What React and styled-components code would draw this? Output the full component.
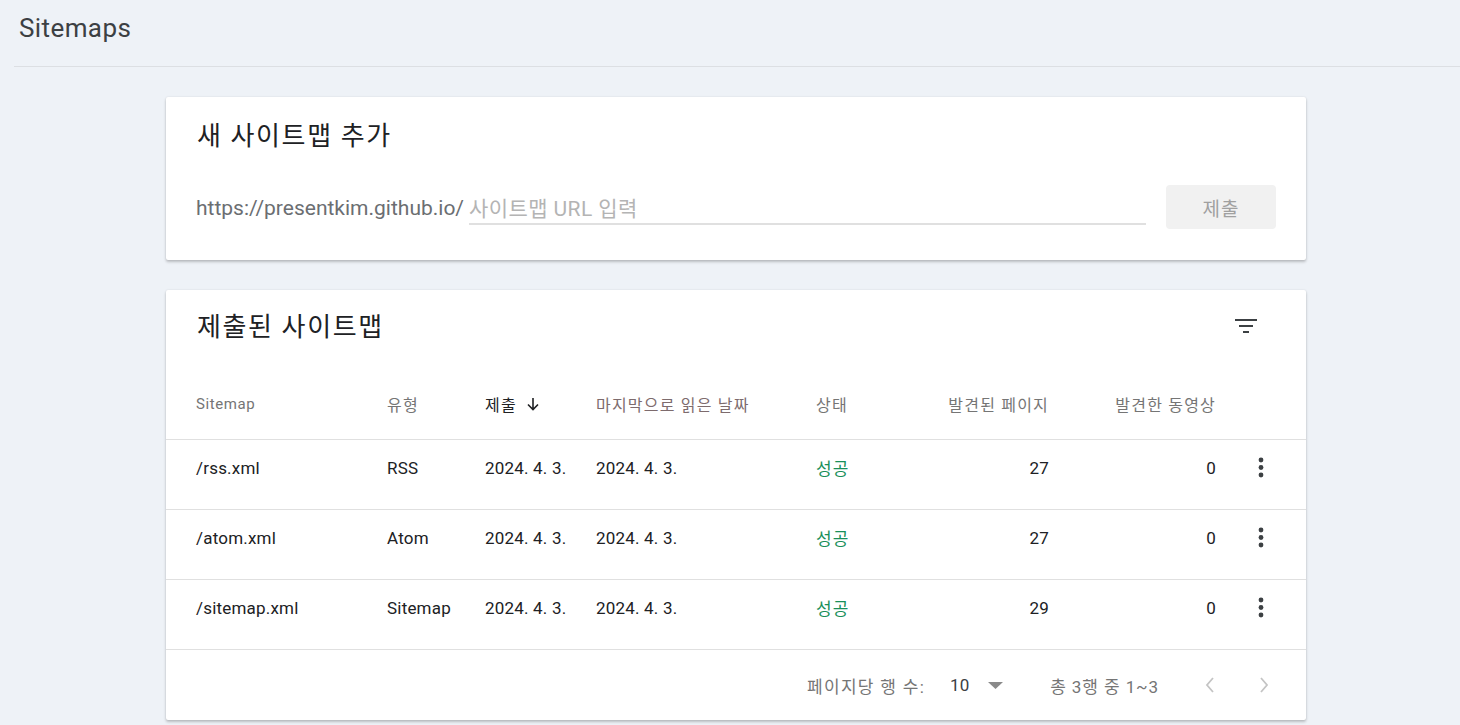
import React from "react";
import styled, { createGlobalStyle } from "styled-components";

const Global = createGlobalStyle`
  html, body { margin: 0; padding: 0; background: #eef2f7; }
  body { font-family: Roboto, "Noto Sans CJK KR", sans-serif; color: #202124; }
  * { box-sizing: border-box; }
`;

const Page = styled.div`
  width: 1460px;
  height: 725px;
  overflow: hidden;
  background: #eef2f7;
`;

const TopBar = styled.header`
  margin-left: 14px;
  height: 67px;
  border-bottom: 1px solid #dcdfe3;
  display: flex;
  align-items: center;
  padding: 0 5px 10px;
`;

const PageTitle = styled.h1`
  margin: 0;
  font-size: 26px;
  font-weight: 400;
  color: #3c4043;
  letter-spacing: 0.4px;
`;

const Content = styled.main`
  width: 1140px;
  margin: 30px 0 0 166px;
  display: flex;
  flex-direction: column;
  gap: 30px;
`;

const Card = styled.section`
  background: #fff;
  border-radius: 2px;
  box-shadow: 0 2px 3px rgba(0, 0, 0, 0.22), 0 0 2px rgba(0, 0, 0, 0.1);
`;

const CardTitle = styled.h2`
  margin: 0;
  font-size: 26px;
  line-height: 32px;
  font-weight: 400;
  color: #202124;
  letter-spacing: 1.6px;
`;

const AddBody = styled.div`
  padding: 23px 30px 31px 31px;
`;

const UrlRow = styled.div`
  display: flex;
  align-items: center;
  margin-top: 33px;
  height: 44px;
`;

const Prefix = styled.span`
  font-size: 21px;
  color: #6b6e72;
  margin-left: -1px;
  padding-top: 2px;
  white-space: nowrap;
`;

const UrlInput = styled.input`
  flex: 1;
  margin-left: 5px;
  height: 30px;
  margin-top: 6px;
  border: none;
  border-bottom: 2px solid #e0e0e0;
  outline: none;
  font-family: Roboto, "Noto Sans CJK KR", sans-serif;
  font-size: 21px;
  color: #202124;
  padding: 0 0 1px 0;
  background: transparent;
  &::placeholder { color: #b4b4b4; letter-spacing: 0.4px; }
`;

const SubmitButton = styled.button`
  margin-left: 20px;
  width: 110px;
  height: 44px;
  border: none;
  border-radius: 4px;
  background: #f1f1f1;
  color: #a0a0a0;
  font-family: Roboto, "Noto Sans CJK KR", sans-serif;
  font-size: 19px;
  letter-spacing: 1px;
`;

const ListHead = styled.div`
  height: 80px;
  padding: 21px 45px 0 31px;
  display: flex;
  justify-content: space-between;
  align-items: flex-start;
`;

const IconButton = styled.button`
  border: none;
  background: none;
  padding: 0;
  display: flex;
  align-items: center;
  justify-content: center;
  width: ${(p) => p.$size || 30}px;
  height: ${(p) => p.$size || 30}px;
`;

const cols = "191px 98px 111px 220px 100px 133px 167px 90px";

const Row = styled.div`
  display: grid;
  grid-template-columns: ${cols};
  padding-left: 30px;
  height: 70px;
  align-items: center;
  border-bottom: 1px solid #e0e0e0;
`;

const HeadCell = styled.div`
  font-size: ${(p) => (p.$latin ? "15px" : "16px")};
  letter-spacing: ${(p) => (p.$latin ? "0.6px" : "1.2px")};
  color: ${(p) => (p.$active ? "#202124" : p.$tint ? "#7d6b6d" : "#757575")};
  text-align: ${(p) => (p.$right ? "right" : "left")};
  display: flex;
  align-items: center;
  justify-content: ${(p) => (p.$right ? "flex-end" : "flex-start")};
  gap: 9px;
  padding-bottom: 1px;
`;

const Cell = styled.div`
  font-size: 17px;
  color: ${(p) => (p.$ok ? "#1a8f5a" : "#202124")};
  text-align: ${(p) => (p.$right ? "right" : "left")};
  display: flex;
  justify-content: ${(p) => (p.$right ? "flex-end" : p.$center ? "center" : "flex-start")};
  letter-spacing: ${(p) => (p.$ok ? "1.2px" : "0.2px")};
  padding-bottom: 14px;
`;

const Footer = styled.div`
  height: 70px;
  display: flex;
  align-items: center;
  padding-left: 641px;
  font-size: 17px;
  color: #757575;
`;

const FooterLabel = styled.span`
  letter-spacing: 1.3px;
`;

const PerPage = styled.div`
  display: flex;
  align-items: center;
  margin-left: 25px;
  color: #3c4043;
  gap: 19px;
`;

const Range = styled.span`
  margin-left: 47px;
  letter-spacing: 0.9px;
`;

const Pager = styled.div`
  display: flex;
  align-items: center;
  gap: 24px;
  margin-left: 36px;
`;

const FilterIcon = () => (
  <svg width="24" height="16" viewBox="0 0 24 16">
    <rect x="1" y="1" width="22" height="2" fill="#3c4043" />
    <rect x="5" y="7" width="14" height="2" fill="#3c4043" />
    <rect x="9" y="13" width="6" height="2" fill="#3c4043" />
  </svg>
);

const MoreIcon = () => (
  <svg width="6" height="22" viewBox="0 0 6 22">
    <circle cx="3" cy="3" r="2.4" fill="#3c4043" />
    <circle cx="3" cy="10.5" r="2.4" fill="#3c4043" />
    <circle cx="3" cy="18" r="2.4" fill="#3c4043" />
  </svg>
);

const ArrowDown = () => (
  <svg width="14" height="14" viewBox="0 0 14 14">
    <path d="M7 1v11M2 7.5l5 5 5-5" stroke="#202124" strokeWidth="1.6" fill="none" />
  </svg>
);

const Caret = () => (
  <svg width="15" height="7" viewBox="0 0 15 7">
    <path d="M0 0h15L7.5 7z" fill="#8a8a8a" />
  </svg>
);

const Chevron = ({ dir }) => (
  <svg width="10" height="16" viewBox="0 0 10 16">
    <path
      d={dir === "left" ? "M8 1L2 8l6 7" : "M2 1l6 7-6 7"}
      stroke="#c4c4c4"
      strokeWidth="1.8"
      fill="none"
    />
  </svg>
);

const rows = [
  { path: "/rss.xml", type: "RSS", pages: 27 },
  { path: "/atom.xml", type: "Atom", pages: 27 },
  { path: "/sitemap.xml", type: "Sitemap", pages: 29 },
];

export default function App() {
  return (
    <Page>
      <Global />
      <TopBar>
        <PageTitle>Sitemaps</PageTitle>
      </TopBar>
      <Content>
        <Card>
          <AddBody>
            <CardTitle>새 사이트맵 추가</CardTitle>
            <UrlRow>
              <Prefix>https://presentkim.github.io/</Prefix>
              <UrlInput placeholder="사이트맵 URL 입력" />
              <SubmitButton>제출</SubmitButton>
            </UrlRow>
          </AddBody>
        </Card>
        <Card>
          <ListHead>
            <CardTitle>제출된 사이트맵</CardTitle>
            <IconButton $size={30}>
              <FilterIcon />
            </IconButton>
          </ListHead>
          <Row>
            <HeadCell $latin>Sitemap</HeadCell>
            <HeadCell>유형</HeadCell>
            <HeadCell $active>
              제출 <ArrowDown />
            </HeadCell>
            <HeadCell $tint>마지막으로 읽은 날짜</HeadCell>
            <HeadCell>상태</HeadCell>
            <HeadCell $right>발견된 페이지</HeadCell>
            <HeadCell $right>발견한 동영상</HeadCell>
            <HeadCell />
          </Row>
          {rows.map((r) => (
            <Row key={r.path}>
              <Cell>{r.path}</Cell>
              <Cell>{r.type}</Cell>
              <Cell>2024. 4. 3.</Cell>
              <Cell>2024. 4. 3.</Cell>
              <Cell $ok>성공</Cell>
              <Cell $right>{r.pages}</Cell>
              <Cell $right>0</Cell>
              <Cell $center>
                <IconButton $size={30}>
                  <MoreIcon />
                </IconButton>
              </Cell>
            </Row>
          ))}
          <Footer>
            <FooterLabel>페이지당 행 수:</FooterLabel>
            <PerPage>
              <span>10</span>
              <Caret />
            </PerPage>
            <Range>총 3행 중 1~3</Range>
            <Pager>
              <IconButton $size={30}>
                <Chevron dir="left" />
              </IconButton>
              <IconButton $size={30}>
                <Chevron dir="right" />
              </IconButton>
            </Pager>
          </Footer>
        </Card>
      </Content>
    </Page>
  );
}
